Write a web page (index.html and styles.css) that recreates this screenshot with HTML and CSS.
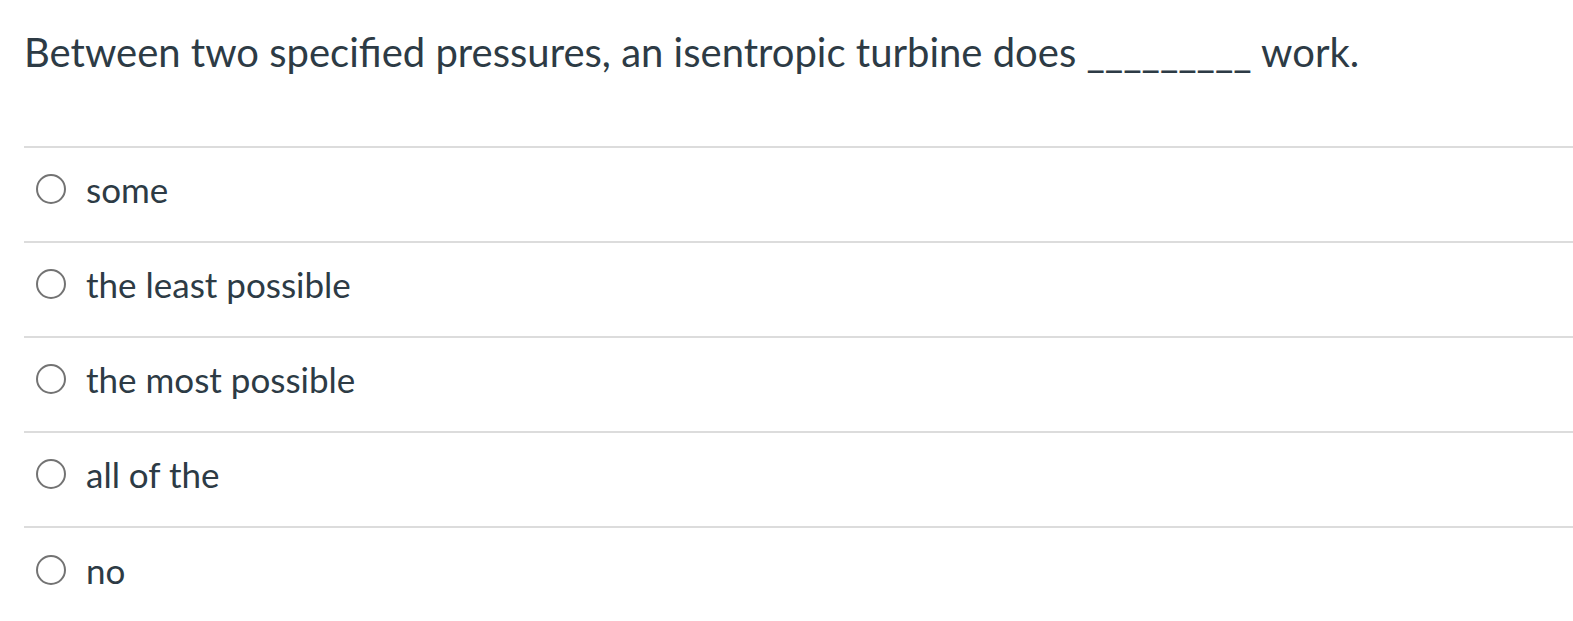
FILE: index.html
```html
<!DOCTYPE html>
<html>
<head>
<meta charset="utf-8">
<link rel="stylesheet" href="styles.css">
</head>
<body>
<div class="question">
  <p class="prompt">Between two specified pressures, an isentropic turbine does _________ work.</p>
  <ul class="answers">
    <li class="answer"><span class="radio"></span><span class="label">some</span></li>
    <li class="answer"><span class="radio"></span><span class="label">the least possible</span></li>
    <li class="answer"><span class="radio"></span><span class="label">the most possible</span></li>
    <li class="answer"><span class="radio"></span><span class="label">all of the</span></li>
    <li class="answer"><span class="radio"></span><span class="label">no</span></li>
  </ul>
</div>
</body>
</html>
```
FILE: styles.css
```css
html, body {
  margin: 0;
  padding: 0;
  background: #ffffff;
}
body {
  font-family: Lato, "Liberation Sans", sans-serif;
  color: #2d3b45;
}
.question {
  padding: 0 0 0 24px;
}
.prompt {
  margin: 0;
  padding-top: 28px;
  font-size: 40px;
  line-height: 48px;
  height: 146px;
  box-sizing: border-box;
}
.answers {
  list-style: none;
  margin: 0;
  padding: 0;
  border-top: 2px solid #dcdcdc;
}
.answer {
  display: flex;
  align-items: center;
  gap: 20px;
  border-bottom: 2px solid #dcdcdc;
  padding-left: 12px;
  padding-bottom: 12px;
  box-sizing: border-box;
  height: 95px;
}
.answer:last-child {
  border-bottom: none;
}
.radio {
  width: 26px;
  height: 26px;
  border: 2px solid #737373;
  border-radius: 50%;
  flex: none;
}
.label {
  font-size: 35px;
  line-height: 42px;
}
```
